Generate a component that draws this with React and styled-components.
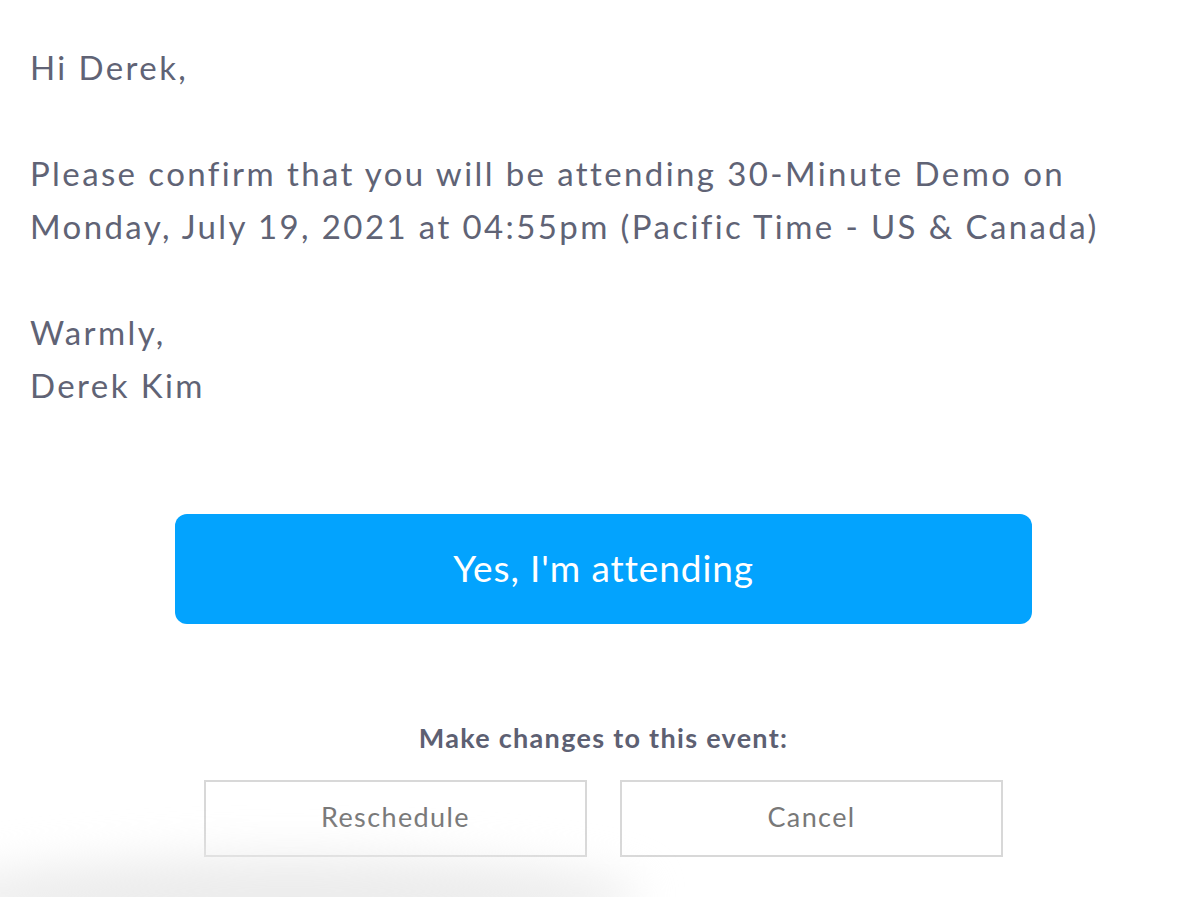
import React from "react";
import styled, { createGlobalStyle } from "styled-components";

const Global = createGlobalStyle`
  html, body { margin: 0; padding: 0; background: #ffffff; }
  body { overflow: hidden; }
  #root { min-height: 897px; }
`;

const Page = styled.div`
  position: relative;
  width: 1200px;
  height: 897px;
  box-sizing: border-box;
  padding: 41px 23px 0 30px;
  font-family: Lato, "Open Sans", sans-serif;
  color: #606375;
  overflow: hidden;
`;

const Letter = styled.div`
  display: flex;
  flex-direction: column;
  gap: 53px;
`;

const Para = styled.p`
  margin: 0;
  font-size: 33px;
  line-height: 53px;
  letter-spacing: 2.4px;
  white-space: nowrap;
`;

const Actions = styled.div`
  display: flex;
  flex-direction: column;
  align-items: center;
  margin-top: 102px;
`;

const PrimaryButton = styled.button`
  width: 857px;
  height: 110px;
  padding: 0 0 4px;
  border: none;
  border-radius: 12px;
  background: #03a3fe;
  color: #ffffff;
  font-family: inherit;
  font-size: 37px;
  letter-spacing: 0.9px;
  cursor: pointer;
`;

const ChangesLabel = styled.div`
  margin-top: 98px;
  font-size: 27px;
  line-height: 32px;
  font-weight: 700;
  letter-spacing: 1.3px;
  color: #5d6072;
`;

const ButtonRow = styled.div`
  display: flex;
  gap: 33px;
  margin-top: 26px;
`;

const SecondaryButton = styled.button`
  width: 383px;
  height: 77px;
  padding: 0 0 4px;
  box-sizing: border-box;
  border: 2px solid #d8d8d8;
  background: #ffffff;
  color: #787878;
  font-family: inherit;
  font-size: 27px;
  letter-spacing: 1.4px;
  cursor: pointer;
`;

const BottomShade = styled.div`
  position: absolute;
  left: -60px;
  bottom: -40px;
  width: 700px;
  height: 80px;
  border-radius: 50%;
  background: #ececec;
  filter: blur(22px);
  pointer-events: none;
`;

export default function App() {
  return (
    <>
      <Global />
      <Page>
        <Letter>
          <Para>Hi Derek,</Para>
          <Para>
            Please confirm that you will be attending 30-Minute Demo on
            <br />
            Monday, July 19, 2021 at 04:55pm (Pacific Time - US &amp; Canada)
          </Para>
          <Para>
            Warmly,
            <br />
            Derek Kim
          </Para>
        </Letter>
        <Actions>
          <PrimaryButton>Yes, I'm attending</PrimaryButton>
          <ChangesLabel>Make changes to this event:</ChangesLabel>
          <ButtonRow>
            <SecondaryButton>Reschedule</SecondaryButton>
            <SecondaryButton>Cancel</SecondaryButton>
          </ButtonRow>
        </Actions>
        <BottomShade />
      </Page>
    </>
  );
}
